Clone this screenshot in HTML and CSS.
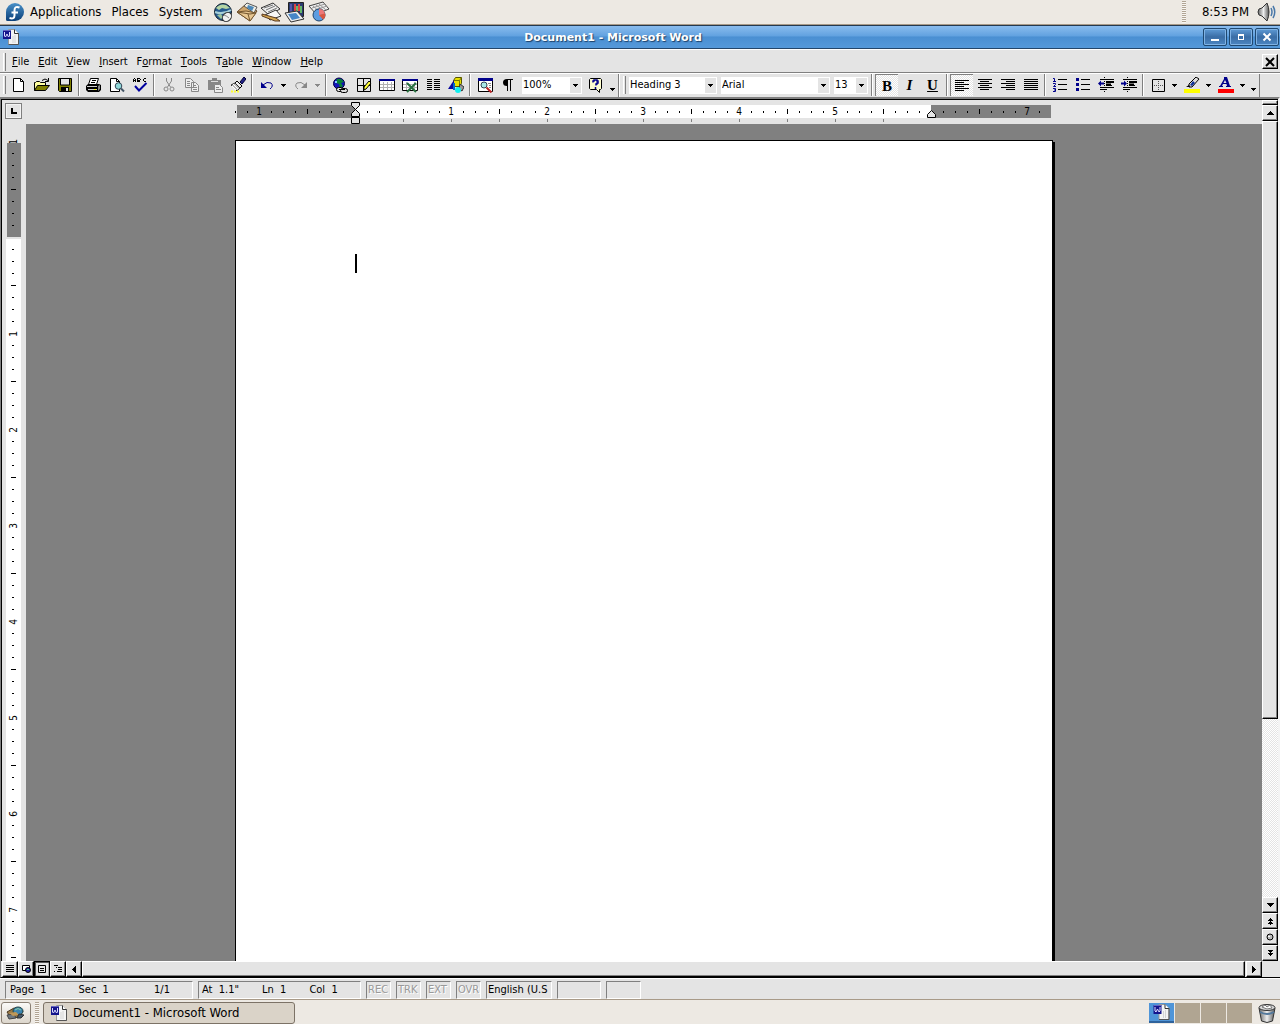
FILE: index.html
```html
<!DOCTYPE html>
<html lang="en">
<head>
<meta charset="utf-8">
<title>Document1 - Microsoft Word</title>
<link rel="stylesheet" href="styles.css">
</head>
<body>
<svg class="defs" width="0" height="0" aria-hidden="true">
  <defs>
    <linearGradient id="fedora" x1="0" y1="0" x2="0" y2="1"><stop offset="0" stop-color="#4a90c8"/><stop offset="1" stop-color="#0b3f78"/></linearGradient>
    <linearGradient id="metal" x1="0" y1="0" x2="1" y2="0"><stop offset="0" stop-color="#666"/><stop offset=".5" stop-color="#eee"/><stop offset="1" stop-color="#555"/></linearGradient>
  </defs>
  <symbol id="word" viewBox="0 0 16 16">
    <path d="M5.500 .5h6l4 4v11h-10z" fill="#f4f4f4" stroke="#999"/>
    <path d="M11.500 .5v4h4" fill="#fff" stroke="#333"/>
    <path d="M15.500 4v11.500h-10" fill="none" stroke="#555"/>
    <path d="M12 6v8M10 7v7" stroke="#d4d4d4"/>
    <rect x="0" y="1" width="8" height="9" fill="#15158c"/>
    <path d="M0 1.500h8" stroke="#6464c0"/>
    <path d="M1.500 3v4l1 1 1.500-3 1.500 3 1-1V3" fill="none" stroke="#dcdcff"/>
  </symbol>
  <symbol id="down" viewBox="0 0 5 3"><path d="M0 0h5v1h-1v1h-1v1h-1v-1h-1v-1h-1z"/></symbol>
</svg>

<header class="panel">
  <nav class="panel-menus">
    <svg width="20" height="20" viewBox="0 0 20 20" aria-hidden="true"><path d="M10 1a9 9 0 0 1 9 9 9 9 0 0 1-9 9H2.500Q1 19 1 17.500V10a9 9 0 0 1 9-9z" fill="url(#fedora)"/><path d="M14.500 5.500q-5-2-5 3v5q0 4-5 2.500M6.500 10.500h6.500" fill="none" stroke="#fff" stroke-width="2"/></svg>
    <button class="panel-item">Applications</button>
    <button class="panel-item">Places</button>
    <button class="panel-item">System</button>
  </nav>
  <div class="launchers">
    <button aria-label="Web browser"><svg width="22" height="22" viewBox="0 0 22 22"><circle cx="11" cy="11" r="8.500" fill="#255a8e" stroke="#14202c"/><path d="M4 7q4-5 10-3l4 3-4 1-4-1-3 2z" fill="#b4d4a4"/><path d="M3 11q8 3 16-2" fill="none" stroke="#a8d0d8" stroke-width="2"/><path d="M5 14l4-1 2 3-2 2z" fill="#9bc29b"/><ellipse cx="15" cy="16" rx="5" ry="4" transform="rotate(-45 15 16)" fill="#f0f0f0" stroke="#333"/><path d="M12 14q3 1 5 3" fill="none" stroke="#888"/></svg></button>
    <button aria-label="Email"><svg width="22" height="22" viewBox="0 0 22 22"><path d="M1 11L10 3l11 7-7 10z" fill="#cfa66c" stroke="#63482a"/><path d="M8 5l3-3 10 4-3 6z" fill="#f0efe6" stroke="#555"/><path d="M12 4l6 2-2 4-5-3z" fill="#4d88b8"/><path d="M1 11l9-1 10 2-6 8z" fill="#e7c792" stroke="#73552e"/><path d="M1 11l13 2 6-1M14 20l-2-7" fill="none" stroke="#73552e"/></svg></button>
    <button aria-label="Word processor"><svg width="22" height="22" viewBox="0 0 22 22"><path d="M1 7l12-5 7 6-11 6z" fill="#eee" stroke="#333"/><path d="M4 7l9-3M6 9l9-4M8 11l9-4" stroke="#777"/><path d="M5 14l11-5 5 6-11 4z" fill="#f8f8f8" stroke="#333"/><path d="M2 13l14 4 4 3-5 0L2 15z" fill="#d7a952" stroke="#5a3a20"/></svg></button>
    <button aria-label="Presentations"><svg width="22" height="22" viewBox="0 0 22 22"><path d="M4.500 1.500h15v14h-15z" fill="#2c3a70" stroke="#222"/><path d="M7 3v9" stroke="#55a" stroke-width="2"/><path d="M11 3v7M15 3v7" stroke="#d44" stroke-width="2"/><path d="M13 5v6M17 5v7" stroke="#67b86b" stroke-width="2"/><path d="M1 12l12-2 7 8-13 3z" fill="#eee" stroke="#333"/><path d="M4 13l8-1 4 5-8 2z" fill="#4686c7"/></svg></button>
    <button aria-label="Spreadsheet"><svg width="22" height="22" viewBox="0 0 22 22"><path d="M1 5l14-4 6 7-13 5z" fill="#eee" stroke="#444"/><path d="M5 5l7 6M8 4l7 5M11 3l7 6M4 7l13-4M7 9l12-4" stroke="#999"/><circle cx="11" cy="14" r="6" fill="#5c9ce0" stroke="#20456d"/><path d="M11 14V8a6 6 0 0 1 6 5z" fill="#e77"/><path d="M11 14l6-1.500q1 4-2 6z" fill="#d9553f"/></svg></button>
  </div>
  <div class="panel-right">
    <span class="grip"></span>
    <time class="clock">8:53 PM</time>
    <button aria-label="Volume"><svg width="20" height="20" viewBox="0 0 20 20"><path d="M2 7l3-1 5-5q4 9 0 18l-5-5-3-1q-2-3 0-6z" fill="url(#metal)" stroke="#333"/><path d="M14 6q2 4 0 8M16 4q3.500 6 0 12" fill="none" stroke="#4a78a8" stroke-width="1.500"/></svg></button>
  </div>
</header>

<main class="window">
  <div class="titlebar">
    <svg width="16" height="16" aria-hidden="true"><use href="#word"/></svg>
    <h1>Document1 - Microsoft Word</h1>
    <div class="wm-buttons">
      <button aria-label="Minimize"><svg width="12" height="12" viewBox="0 0 12 12"><path d="M2 8h8v2H2z" fill="#fff"/></svg></button>
      <button aria-label="Maximize"><svg width="12" height="12" viewBox="0 0 12 12"><path d="M3 3h6v6H3zM4 5v3h4V5z" fill="#fff" fill-rule="evenodd"/></svg></button>
      <button aria-label="Close"><svg width="12" height="12" viewBox="0 0 12 12"><path d="M2.500 2.500l7 7M9.500 2.500l-7 7" stroke="#fff" stroke-width="2"/></svg></button>
    </div>
  </div>

  <div class="menubar">
    <span class="handle"></span>
    <nav class="menus">
      <button><u>F</u>ile</button><button><u>E</u>dit</button><button><u>V</u>iew</button><button><u>I</u>nsert</button><button>F<u>o</u>rmat</button><button><u>T</u>ools</button><button>T<u>a</u>ble</button><button><u>W</u>indow</button><button><u>H</u>elp</button>
    </nav>
    <button class="bevel doc-close" aria-label="Close document"><svg width="10" height="10" viewBox="0 0 10 10"><path d="M1 1l8 8M9 1l-8 8" stroke="#000" stroke-width="2"/></svg></button>
  </div>

  <div class="toolbars">
    <div class="toolbar">
      <span class="handle"></span>
      <button class="tool" aria-label="New"><svg width="16" height="16" viewBox="0 0 16 16"><path d="M2.500 1.500h7l3 3v10h-10z" fill="#fff" stroke="#000"/><path d="M9.500 1.500v3h3" fill="none" stroke="#000"/></svg></button>
      <button class="tool" aria-label="Open"><svg width="18" height="16" viewBox="0 0 18 16"><path d="M1.500 13.500v-8h1l1-1h3l1 1h5v3" fill="#ffffa0" stroke="#000"/><path d="M1.500 13.500l3-5h12l-4 5z" fill="#808000" stroke="#000"/><path d="M9 3.500q3-3 6 0M15.500 1v3.500H12" fill="none" stroke="#000"/></svg></button>
      <button class="tool" aria-label="Save"><svg width="16" height="16" viewBox="0 0 16 16"><path d="M1.500 1.500h13v13h-12l-1-1z" fill="#808000" stroke="#000"/><path d="M4 2h8v6H4z" fill="#e4e4e4"/><path d="M4 10h8v5H4z"/><path d="M9 11h2v3H9z" fill="#e4e4e4"/><path d="M3.500 2v6h9V2" fill="none" stroke="#000"/></svg></button>
      <span class="sep"></span>
      <button class="tool" aria-label="Print"><svg width="17" height="16" viewBox="0 0 17 16"><path d="M5.500 1.500h8l-2 6h-8z" fill="#fff" stroke="#000"/><path d="M7 3.500h4M6 5.500h4" stroke="#000"/><path d="M3 7h11l2 1v5l-2 2H3l-2-2V9z"/><path d="M2 9.500h10M3 12.500h9" stroke="#ccc"/><path d="M9 12.500h2" stroke="#ff0"/><path d="M13 9l2-1v4l-2 2z" fill="#888"/></svg></button>
      <button class="tool" aria-label="Print preview"><svg width="17" height="16" viewBox="0 0 17 16"><path d="M2.500 1.500h6l3 3v10h-9z" fill="#fff" stroke="#000"/><path d="M8.500 1.500v3h3" fill="none" stroke="#000"/><circle cx="10.500" cy="9" r="3.300" fill="#8fd8d8" stroke="#345"/><path d="M13 11.500l3 3" stroke="#456" stroke-width="2"/></svg></button>
      <button class="tool" aria-label="Spelling"><svg width="16" height="16" viewBox="0 0 16 16"><path d="M1.500 5V2M3.500 5V2M2 1.500h1M2 3.500h1M5.500 5V1M6 1.500h2M6 3.500h2M6 4.500h2M8.500 2v1M11.500 2v2M12 1.500h2M12 4.500h2" fill="none" stroke="#000"/><path d="M3 9l4 4.500L14.500 6" fill="none" stroke="#0000a0" stroke-width="2"/></svg></button>
      <span class="sep"></span>
      <button class="tool off" aria-label="Cut" disabled><svg width="16" height="16" viewBox="0 0 16 16"><path d="M5.500 1v3l4 6M10.500 1v3l-4 6" fill="none" stroke="#888"/><circle cx="5" cy="12" r="2" fill="none" stroke="#888"/><circle cx="11" cy="12" r="2" fill="none" stroke="#888"/></svg></button>
      <button class="tool off" aria-label="Copy" disabled><svg width="16" height="16" viewBox="0 0 16 16"><path d="M1.500 1.500h5l3 3v6h-8zM7.500 5.500h4l3 3v6h-7z" fill="#eee" stroke="#888"/><path d="M3 4.500h3M3 6.500h3M3 8.500h3M9 8.500h3M9 10.500h4M9 12.500h4" stroke="#888"/></svg></button>
      <button class="tool off" aria-label="Paste" disabled><svg width="16" height="16" viewBox="0 0 16 16"><path d="M1 3h4V1h5v2h4v10H1z" fill="#888"/><path d="M4 4.500h7" stroke="#ddd"/><path d="M7.500 7.500h5l3 3v5h-8z" fill="#eee" stroke="#888"/><path d="M9 10.500h3M9 12.500h5" stroke="#888"/></svg></button>
      <button class="tool" aria-label="Format painter"><svg width="16" height="16" viewBox="0 0 16 16"><path d="M14 0l2 2-4 5-2-2z" fill="#228" stroke="#003"/><path d="M7 4l5 5-2 2-5-5z" fill="#eee" stroke="#000"/><path d="M5 6l5 5-3 3-6-6z" fill="#bbb" stroke="#333"/><path d="M3 7l5 5M2 9l4 4" stroke="#fff"/><path d="M1 14.500h8" stroke="#ff3" stroke-width="2" stroke-dasharray="2 1"/></svg></button>
      <span class="sep"></span>
      <button class="tool" aria-label="Undo"><svg width="16" height="16" viewBox="0 0 16 16"><path d="M2 5v6h6z" fill="#00008b"/><path d="M4 8q4-4 8-2 3 3-1 6" fill="none" stroke="#00008b"/></svg></button>
      <button class="drop" aria-label="Undo list"><svg width="5" height="3"><use href="#down"/></svg></button>
      <button class="tool off" aria-label="Redo" disabled><svg width="16" height="16" viewBox="0 0 16 16"><path d="M14 5v6H8z" fill="#888"/><path d="M12 8q-4-4-8-2-3 3 1 6" fill="none" stroke="#888"/></svg></button>
      <button class="drop off" aria-label="Redo list" disabled><svg width="5" height="3"><use href="#down"/></svg></button>
      <span class="sep"></span>
      <button class="tool" aria-label="Insert hyperlink"><svg width="17" height="17" viewBox="0 0 17 17"><circle cx="7" cy="6.500" r="5.500" fill="#1414b8" stroke="#004"/><path d="M5 2l4 0 3 3-3 1 2 3-3 2-1-4-3-1z" fill="#088038"/><path d="M3 4h2v2H3z" fill="#8cf"/><rect x="4.500" y="10.500" width="7" height="4" rx="2" fill="#ddd" stroke="#000"/><rect x="8.500" y="11.500" width="7" height="4" rx="2" fill="#ddd" stroke="#000"/><path d="M7 12.500h6" stroke="#000"/></svg></button>
      <button class="tool" aria-label="Tables and borders"><svg width="16" height="16" viewBox="0 0 16 16"><path d="M1.500 1.500h13v13h-13zM7.500 1.500v13M1.500 8.500h13" fill="none" stroke="#000"/><path d="M13 4l2 2-5 6-2 1 0-3z" fill="#ff3" stroke="#000"/></svg></button>
      <button class="tool" aria-label="Insert table"><svg width="16" height="16" viewBox="0 0 16 16"><path d="M.5 2.500h15v11H.5z" fill="#fff" stroke="#000"/><path d="M0 2h16v2H0z" fill="#00008b"/><path d="M1 7.500h14M1 10.500h14M4.500 5v8M8.500 5v8M12.500 5v8" stroke="#b0b0b0"/></svg></button>
      <button class="tool" aria-label="Insert worksheet"><svg width="16" height="16" viewBox="0 0 16 16"><path d="M.5 2.500h15v11H.5z" fill="#fff" stroke="#000"/><path d="M0 2h16v2H0z" fill="#00008b"/><path d="M1 7.500h14M1 10.500h14M4.500 5v8M12.500 5v8" stroke="#b0b0b0"/><path d="M5 6l9 9M14 6l-9 9" stroke="#287040" stroke-width="2"/></svg></button>
      <button class="tool" aria-label="Columns"><svg width="16" height="16" viewBox="0 0 16 16"><path d="M2 2.500h5M2 4.500h5M2 6.500h5M2 8.500h5M2 10.500h5M2 12.500h5M9 2.500h6M9 4.500h6M9 6.500h6M9 8.500h6M9 10.500h6M9 12.500h6" stroke="#000"/></svg></button>
      <button class="tool" aria-label="Drawing"><svg width="16" height="16" viewBox="0 0 16 16"><path d="M5.500 3.500l2-3h6v6l-2 3h-6z" fill="#e8e000" stroke="#555500"/><path d="M5.500 3.500h6v5M11.500 3.500l2-3" fill="none" stroke="#777700"/><path d="M0 12l6-9v9z" fill="#0808a0"/><path d="M5 6h2v7H5z" fill="#06c"/><path d="M12 7l4 3-2 4-3-2z" fill="#999" stroke="#333"/><circle cx="10" cy="13" r="3" fill="#1ee"/></svg></button>
      <span class="sep"></span>
      <button class="tool" aria-label="Document map"><svg width="16" height="16" viewBox="0 0 16 16"><path d="M1.500 2.500h14v12h-14z" fill="#fff" stroke="#000"/><path d="M1 1h15v3H1z" fill="#00008b"/><path d="M11 6.500h3M12 8.500h2M12 10.500h2" stroke="#888"/><circle cx="7" cy="8" r="3" fill="#a8e8e8" stroke="#345"/><path d="M9.500 10.500l5 5" stroke="#b22" stroke-width="2"/></svg></button>
      <button class="tool" aria-label="Show paragraph marks"><svg width="16" height="16" viewBox="0 0 16 16"><path d="M13 2v1h-2v11h-1V3H8v11H7V9Q3 9 3 5.500T7 2z"/></svg></button>
      <label class="combo combo-zoom"><select aria-label="Zoom"><option>100%</option></select><span class="arrow"><svg width="5" height="3"><use href="#down"/></svg></span></label>
      <button class="tool" aria-label="Help"><svg width="16" height="16" viewBox="0 0 16 16"><path d="M2.500 1.500h10l1 1v9l-1 1h-1v3l-3-3h-6l-1-1v-9z" fill="#ffffd0" stroke="#000"/><path d="M5 5.500V4h1V3h3v1h1v2H9v1H8v1.500M7.500 10v2" fill="none" stroke="#00008b" stroke-width="1.500"/></svg></button>
      <button class="drop more" aria-label="More buttons"><svg width="5" height="3"><use href="#down"/></svg></button>
    </div>
    <div class="toolbar">
      <span class="handle"></span>
      <label class="combo combo-style"><select aria-label="Style"><option>Heading 3</option></select><span class="arrow"><svg width="5" height="3"><use href="#down"/></svg></span></label>
      <label class="combo combo-font"><select aria-label="Font"><option>Arial</option></select><span class="arrow"><svg width="5" height="3"><use href="#down"/></svg></span></label>
      <label class="combo combo-size"><select aria-label="Font size"><option>13</option></select><span class="arrow"><svg width="5" height="3"><use href="#down"/></svg></span></label>
      <span class="sep"></span>
      <button class="tool letter pressed" aria-pressed="true"><b>B</b></button>
      <button class="tool letter"><i>I</i></button>
      <button class="tool letter"><u>U</u></button>
      <span class="sep"></span>
      <button class="tool pressed" aria-pressed="true" aria-label="Align left"><svg width="16" height="16" viewBox="0 0 16 16"><path d="M1 2.500h14M1 4.500h9M1 6.500h14M1 8.500h9M1 10.500h14M1 12.500h9" stroke="#000"/></svg></button>
      <button class="tool" aria-label="Center"><svg width="16" height="16" viewBox="0 0 16 16"><path d="M1 2.500h14M3 4.500h9M1 6.500h14M3 8.500h9M1 10.500h14M3 12.500h9" stroke="#000"/></svg></button>
      <button class="tool" aria-label="Align right"><svg width="16" height="16" viewBox="0 0 16 16"><path d="M1 2.500h14M6 4.500h9M1 6.500h14M6 8.500h9M1 10.500h14M6 12.500h9" stroke="#000"/></svg></button>
      <button class="tool" aria-label="Justify"><svg width="16" height="16" viewBox="0 0 16 16"><path d="M1 2.500h14M1 4.500h14M1 6.500h14M1 8.500h14M1 10.500h14M1 12.500h14" stroke="#000"/></svg></button>
      <span class="sep"></span>
      <button class="tool" aria-label="Numbering"><svg width="16" height="16" viewBox="0 0 16 16"><path d="M1 1.500h1.500v3M1 4.500h3M1 6.500h2.500v1L1.500 9.500H4M1 11.500h2.500v3H1M2 13h1" fill="none" stroke="#00008b"/><path d="M6 2.500h9M6 7.500h9M6 12.500h9" stroke="#000"/></svg></button>
      <button class="tool" aria-label="Bullets"><svg width="16" height="16" viewBox="0 0 16 16"><path d="M1 1h3v3H1zM1 6h3v3H1zM1 11h3v3H1z" fill="#00008b"/><path d="M6 2.500h9M6 7.500h9M6 12.500h9" stroke="#000"/></svg></button>
      <button class="tool" aria-label="Decrease indent"><svg width="16" height="16" viewBox="0 0 16 16"><path d="M2 2.500h14M8 8.500h6M2 10.500h14M2 12.500h7" stroke="#000"/><path d="M8 5h8M8 7.500h5" stroke="#000" stroke-width="2"/><path d="M0 6.500l3-3v2h3v2H3v2z" fill="#00008b"/><path d="M6.500 0v16" stroke="#000" stroke-dasharray="1 1"/></svg></button>
      <button class="tool" aria-label="Increase indent"><svg width="16" height="16" viewBox="0 0 16 16"><path d="M2 2.500h14M8 8.500h6M2 10.500h14M2 12.500h7" stroke="#000"/><path d="M8 5h8M8 7.500h5" stroke="#000" stroke-width="2"/><path d="M6 6.500l-3-3v2H0v2h3v2z" fill="#00008b"/><path d="M6.500 0v16" stroke="#000" stroke-dasharray="1 1"/></svg></button>
      <span class="sep"></span>
      <button class="tool" aria-label="Borders"><svg width="16" height="16" viewBox="0 0 16 16"><path d="M2.500 2.500h12v12h-12z" fill="none" stroke="#000"/><path d="M4 8.500h10M8.500 4v10" stroke="#555" stroke-dasharray="1 1"/></svg></button>
      <button class="drop" aria-label="Border list"><svg width="5" height="3"><use href="#down"/></svg></button>
      <button class="tool" aria-label="Highlight"><svg width="16" height="16" viewBox="0 0 16 16"><path d="M12 0l3 2-7 8-3 0 0-3z" fill="#ddd" stroke="#000"/><path d="M9 4l2 2-3 3-2-1z" fill="#139"/><path d="M2 10l3-2 1 2z"/><path d="M0 12h16v4H0z" fill="#ff0"/></svg></button>
      <button class="drop" aria-label="Highlight colors"><svg width="5" height="3"><use href="#down"/></svg></button>
      <button class="tool" aria-label="Font color"><svg width="16" height="16" viewBox="0 0 16 16"><path d="M6 0h3l3 9h1v1H8V9h1l-.5-2H5L4 9h1v1H1V9h1l4-7zM7 3L5.500 6h3z" fill="#00008b" fill-rule="evenodd"/><path d="M0 12h16v4H0z" fill="#f00"/></svg></button>
      <button class="drop" aria-label="Font colors"><svg width="5" height="3"><use href="#down"/></svg></button>
      <button class="drop more" aria-label="More buttons"><svg width="5" height="3"><use href="#down"/></svg></button>
    </div>
  </div>

  <div class="editor">
    <div class="editor-main">
      <div class="ruler-row">
        <button class="tab-stop" aria-label="Left tab"><svg width="6" height="6" viewBox="0 0 6 6"><path d="M0 0h2v4h4v2H0z"/></svg></button>
        <div class="ruler-track">
          <svg class="ruler" width="818" height="24" viewBox="0 0 818 24">
            <defs><pattern id="hticks" x="24" y="0" width="96" height="24" patternUnits="userSpaceOnUse"><path d="M12 11h1v2h-1zM24 11h1v2h-1zM36 11h1v2h-1zM48 9h1v5h-1zM60 11h1v2h-1zM72 11h1v2h-1zM84 11h1v2h-1z"/></pattern>
            <pattern id="htabs" x="120" y="0" width="48" height="24" patternUnits="userSpaceOnUse"><path d="M0 19h1v3H0z" fill="#808080"/></pattern></defs>
            <rect x="2" y="5" width="814" height="13" fill="#808080"/>
            <rect x="121" y="5" width="575" height="13" fill="#fff"/>
            <rect x="0" y="5" width="816" height="13" fill="url(#hticks)"/>
            <rect x="160" y="19" width="530" height="4" fill="url(#htabs)"/>
            <g class="ruler-text"><text x="24" y="15">1</text><text x="216" y="15">1</text><text x="312" y="15">2</text><text x="408" y="15">3</text><text x="504" y="15">4</text><text x="600" y="15">5</text><text x="792" y="15">7</text></g>
            <path d="M116.500 2.500h8v3l-4 4-4-4zM120.500 9.500l4 4v3h-8v-3zM116.500 17.500h8v6h-8zM696.500 10.500l4 4v3h-8v-3z" fill="#e4e4e4" stroke="#000"/>
          </svg>
        </div>
      </div>
      <div class="work-row">
        <div class="vruler">
          <svg width="24" height="2000" viewBox="0 0 24 2000">
            <defs><pattern id="vticks" x="0" y="17" width="24" height="96" patternUnits="userSpaceOnUse"><path d="M10 12h2v1h-2zM10 24h2v1h-2zM10 36h2v1h-2zM9 48h5v1H9zM10 60h2v1h-2zM10 72h2v1h-2zM10 84h2v1h-2z"/></pattern></defs>
            <g class="ruler-text"><text transform="translate(15 18) rotate(-90)">1</text></g>
            <rect x="5" y="19" width="14" height="94" fill="#808080"/>
            <rect x="4" y="115" width="15" height="1885" fill="#fff"/>
            <rect x="0" y="19" width="24" height="1981" fill="url(#vticks)"/>
            <g class="ruler-text"><text transform="translate(15 210) rotate(-90)">1</text><text transform="translate(15 306) rotate(-90)">2</text><text transform="translate(15 402) rotate(-90)">3</text><text transform="translate(15 498) rotate(-90)">4</text><text transform="translate(15 594) rotate(-90)">5</text><text transform="translate(15 690) rotate(-90)">6</text><text transform="translate(15 786) rotate(-90)">7</text></g>
          </svg>
        </div>
        <div class="desk">
          <div class="sheet" contenteditable="true" role="textbox" aria-label="Document"><span class="caret"></span></div>
        </div>
      </div>
    </div>
    <div class="vscroll">
      <span class="bevel split"></span>
      <button class="bevel sq" aria-label="Scroll up"><svg width="7" height="4" viewBox="0 0 7 4"><path d="M3 0h1v1h1v1h1v1h1v1H0V3h1V2h1V1h1z"/></svg></button>
      <div class="vtrack"><div class="bevel vthumb"></div></div>
      <button class="bevel sq" aria-label="Scroll down"><svg width="7" height="4" viewBox="0 0 7 4"><path d="M0 0h7v1H6v1H5v1H4v1H3V3H2V2H1V1H0z"/></svg></button>
      <button class="bevel sq" aria-label="Previous page"><svg width="7" height="7" viewBox="0 0 7 7"><path d="M3 0h1v1h1v1h1v1H1V2h1V1h1zM3 3h1v1h1v1h1v1H4v1H3V6H1V5h1V4h1z"/></svg></button>
      <button class="bevel sq" aria-label="Select browse object"><svg width="8" height="8" viewBox="0 0 8 8"><circle cx="4" cy="4" r="3" fill="#bbb" stroke="#000"/><path d="M2 3h2v1H2z" fill="#fff"/></svg></button>
      <button class="bevel sq" aria-label="Next page"><svg width="7" height="7" viewBox="0 0 7 7"><path d="M1 0h5v1H5v1H4v1H3V2H2V1H1zM1 3h5v1H5v1H4v1H3V5H2V4H1z"/></svg></button>
    </div>
  </div>

  <div class="hscroll">
    <button class="bevel sq" aria-label="Normal view"><svg width="8" height="8" viewBox="0 0 8 8"><path d="M0 .5h8M0 2.500h8M0 4.500h8M0 6.500h8" stroke="#000"/></svg></button>
    <button class="bevel sq" aria-label="Web layout view"><svg width="9" height="8" viewBox="0 0 9 8"><path d="M.5 .5h7v5h-7z" fill="#fff" stroke="#000"/><circle cx="6" cy="5" r="2.500" fill="#22a" stroke="#000"/><path d="M5 4h2v1H5z" fill="#4d8"/></svg></button>
    <button class="bevel sq sunken" aria-label="Print layout view" aria-pressed="true"><svg width="8" height="8" viewBox="0 0 8 8"><path d="M.5 .5h7v7h-7zM2 3.500h4M2 5.500h4" fill="none" stroke="#000"/></svg></button>
    <button class="bevel sq" aria-label="Outline view"><svg width="8" height="8" viewBox="0 0 8 8"><path d="M0 .5h4M2 2.500h1M4 2.500h4M4 4.500h4M0 6.500h1M3 6.500h5" stroke="#000"/></svg></button>
    <button class="bevel sq" aria-label="Scroll left"><svg width="4" height="7" viewBox="0 0 4 7"><path d="M4 0v7H3V6H2V5H1V4H0V3h1V2h1V1h1V0z"/></svg></button>
    <div class="bevel hthumb"></div>
    <button class="bevel sq" aria-label="Scroll right"><svg width="4" height="7" viewBox="0 0 4 7"><path d="M0 0v7h1V6h1V5h1V4h1V3H3V2H2V1H1V0z"/></svg></button>
  </div>

  <footer class="status">
    <div class="cell cell-page"><span>Page&nbsp; 1</span><span>Sec&nbsp; 1</span><span class="last">1/1</span></div>
    <div class="cell cell-pos"><span>At&nbsp; 1.1"</span><span>Ln&nbsp; 1</span><span>Col&nbsp; 1</span></div>
    <div class="cell mode">REC</div>
    <div class="cell mode">TRK</div>
    <div class="cell mode">EXT</div>
    <div class="cell mode">OVR</div>
    <div class="cell cell-lang">English (U.S</div>
    <div class="cell cell-spell"></div>
    <div class="cell cell-save"></div>
  </footer>
</main>

<footer class="taskbar">
  <button class="show-desktop" aria-label="Show desktop"><svg width="20" height="14" viewBox="0 0 20 14"><path d="M1 6l7-4 9 3-3 6-9 1z" fill="#9a7a48" stroke="#4a3820"/><ellipse cx="12" cy="5" rx="5" ry="4" fill="#3c84b0" stroke="#244"/><path d="M9 4q3-3 6 0" stroke="#8ed0a0" fill="none"/><path d="M1 9l7-1 2 4-7 1z" fill="#6d7780" stroke="#444"/><path d="M3 7l7-1 3 3-6 1z" fill="#c09858"/><path d="M13 8l5 1-3 3-4 0z" fill="#46586a" stroke="#333"/></svg></button>
  <span class="grip"></span>
  <button class="task"><svg width="16" height="16" aria-hidden="true"><use href="#word"/></svg><span>Document1 - Microsoft Word</span></button>
  <div class="tray">
    <div class="pager">
      <button class="current" aria-label="Workspace 1"><svg width="17" height="16" aria-hidden="true"><use href="#word"/></svg></button><button aria-label="Workspace 2"></button><button aria-label="Workspace 3"></button><button aria-label="Workspace 4"></button>
    </div>
    <button class="trash" aria-label="Trash"><svg width="20" height="20" viewBox="0 0 20 20"><path d="M2 5l2.500 13q5.500 3 11 0L18 5z" fill="url(#metal)" stroke="#333"/><ellipse cx="10" cy="4.500" rx="8" ry="3" fill="#d8d8d8" stroke="#333"/><path d="M5 4l3-2 2 2 3-2 2 3-5 1z" fill="#fff" stroke="#777"/><path d="M3 9q7 4 14 0" fill="none" stroke="#52789c" stroke-width="2"/></svg></button>
  </div>
</footer>
</body>
</html>
```
FILE: styles.css
```css
* { box-sizing: border-box; }

body {
  margin: 0;
  height: 100vh;
  display: flex;
  flex-direction: column;
  overflow: hidden;
  background: #ede9e3;
  color: #000;
  font: 11px/14px "DejaVu Sans Condensed", "DejaVu Sans", sans-serif;
}

svg { display: block; flex: none; }
.defs { position: absolute; }

button {
  display: flex;
  align-items: center;
  justify-content: center;
  flex: none;
  margin: 0;
  padding: 0;
  border: 0;
  background: none;
  color: inherit;
  font: inherit;
}

/* desktop panels */
.panel {
  flex: none;
  display: flex;
  align-items: center;
  height: 25px;
  padding: 0 3px 0 5px;
  border-bottom: 1px solid #a89a88;
  font: 13px/16px "DejaVu Sans Condensed", "DejaVu Sans", sans-serif;
}
.panel-menus { display: flex; align-items: center; }
.panel-item { padding: 0 5px; }
.launchers { display: flex; gap: 2px; margin-left: 5px; }
.panel-right { display: flex; align-items: center; gap: 8px; margin-left: auto; }
.clock { margin-left: 8px; }
.grip {
  width: 4px;
  height: 22px;
  background: repeating-linear-gradient(#b0a494 0 1px, #f8f6f2 1px 2px);
}

/* window frame */
.window {
  flex: 1;
  min-height: 0;
  display: flex;
  flex-direction: column;
  background: #e4e4e4;
}
.titlebar {
  flex: none;
  display: flex;
  align-items: center;
  height: 24px;
  padding: 0 1px 0 3px;
  border-top: 1px solid #24394f;
  border-bottom: 1px solid #24466a;
  background: linear-gradient(#8abcee, #62a2e0 45%, #4a8fd2 50%, #5599da);
}
.titlebar h1 {
  flex: 1;
  margin: 0;
  padding: 1px 0 0 4px;
  text-align: center;
  color: #fff;
  font: bold 11px/16px "DejaVu Sans", sans-serif;
  text-shadow: 1px 1px 1px #1c3f66;
}
.wm-buttons { display: flex; gap: 2px; }
.wm-buttons button {
  width: 24px;
  height: 18px;
  border: 1px solid #1f4870;
  border-radius: 2px;
  box-shadow: inset 0 0 0 1px #7fb2e4;
  background: linear-gradient(#5f9bd6, #3a6da5 50%, #4c86c2);
}

.menubar {
  flex: none;
  display: flex;
  align-items: center;
  height: 24px;
  padding: 1px 2px 0 3px;
  border-top: 1px solid #fff;
  border-bottom: 1px solid #808080;
}
.menus { display: flex; padding-left: 1px; }
.menus button { padding: 0 4px 0 5px; }
.doc-close { width: 16px; height: 15px; margin-left: auto; }
.handle {
  flex: none;
  width: 3px;
  height: 18px;
  border-left: 1px solid #fff;
  border-right: 1px solid #808080;
}

.toolbars { flex: none; display: flex; height: 24px; border-top: 1px solid #fff; }
.toolbar {
  display: flex;
  align-items: center;
  padding: 0 0 1px 3px;
  border-right: 1px solid #808080;
}
.toolbar + .toolbar { border-left: 1px solid #fff; }
.tool { width: 23px; height: 22px; }
.handle + .tool { margin-left: 1px; }
.drop { width: 11px; height: 22px; }
.more { padding-top: 8px; }
.off { fill: #888; }
.sep {
  flex: none;
  width: 2px;
  height: 22px;
  margin: 0 2px;
  border-left: 1px solid #808080;
  border-right: 1px solid #fff;
}
.letter { font: bold 15px/16px "Liberation Serif", serif; }
.pressed {
  border-top: 1px solid #808080;
  border-left: 1px solid #808080;
  background: repeating-conic-gradient(#fff 0 25%, #e4e4e4 0 50%) 0 0 / 2px 2px;
}
.combo {
  display: grid;
  grid-template-columns: 1fr 12px;
  align-items: center;
  height: 17px;
  background: #fff;
}
.combo select {
  grid-area: 1 / 1 / 2 / 3;
  height: 17px;
  margin: 0;
  padding: 0 12px 0 1px;
  border: 0;
  appearance: none;
  background: none;
  color: #000;
  font: inherit;
}
.arrow {
  grid-area: 1 / 2 / 2 / 3;
  display: flex;
  align-items: center;
  justify-content: center;
  height: 15px;
  margin-right: 1px;
  background: #e4e4e4;
  pointer-events: none;
}
.combo-zoom { width: 60px; margin: 0 2px 0 3px; }
.combo-style { width: 88px; margin: 0 4px 0 3px; }
.combo-font { width: 109px; margin-right: 4px; }
.combo-size { width: 34px; margin-right: 1px; }

/* editing area */
.bevel {
  flex: none;
  border: 1px solid #000;
  border-top-color: #fff;
  border-left-color: #fff;
  box-shadow: inset -1px -1px 0 #808080;
  background: #e4e4e4;
}
.sq { width: 16px; height: 16px; }
.sunken {
  border: 1px solid #000;
  box-shadow: inset 1px 1px 0 #555, inset -1px -1px 0 #aaa;
}
.editor {
  flex: 1;
  min-height: 0;
  display: flex;
  border-top: 2px solid #808080;
  border-left: 1px solid #808080;
  border-right: 2px solid #f4f4f4;
}
.editor-main {
  flex: 1;
  min-width: 0;
  display: flex;
  flex-direction: column;
  border-top: 1px solid #000;
  border-left: 1px solid #000;
}
.ruler-row { flex: none; display: flex; align-items: flex-start; height: 24px; }
.tab-stop {
  width: 17px;
  height: 16px;
  margin: 3px 4px 0 3px;
  border: 1px solid #808080;
  box-shadow: inset 0 0 0 1px #f4f4f4;
}
.ruler-track { flex: 1; display: flex; justify-content: center; }
.ruler-text {
  font: 10px/12px "DejaVu Sans Condensed", sans-serif;
  text-anchor: middle;
}
.work-row { flex: 1; min-height: 0; display: flex; overflow: hidden; }
.vruler { width: 24px; overflow: hidden; }
.desk {
  flex: 1;
  display: flex;
  justify-content: center;
  padding-top: 16px;
  background: #808080;
}
.sheet {
  width: 818px;
  padding: 113px 119px 0;
  border: 1px solid #000;
  border-bottom: 0;
  box-shadow: 2px 2px 0 #000;
  background: #fff;
  outline: 0;
}
.caret { display: block; width: 2px; height: 19px; background: #000; }

.vscroll {
  flex: none;
  display: flex;
  flex-direction: column;
  width: 16px;
  border-top: 1px solid #000;
}
.split { height: 5px; }
.vtrack {
  flex: 1;
  background: repeating-conic-gradient(#fff 0 25%, #e4e4e4 0 50%) 0 0 / 2px 2px;
}
.vthumb { height: 77%; }

.hscroll {
  flex: none;
  display: flex;
  height: 17px;
  padding: 0 18px 0 1px;
  border-left: 1px solid #808080;
  border-bottom: 1px solid #000;
}
.hthumb { flex: 1; height: 16px; margin-right: 1px; }

.status {
  flex: none;
  display: flex;
  align-items: center;
  gap: 5px;
  height: 21px;
  padding: 1px 0 0 5px;
  border-top: 1px solid #fff;
}
.cell {
  display: flex;
  height: 18px;
  padding: 1px 1px 0 4px;
  border: 1px solid #fff;
  border-top-color: #808080;
  border-left-color: #808080;
  white-space: nowrap;
}
.cell-page { width: 188px; gap: 32px; }
.cell-page .last { margin-left: auto; padding-right: 21px; }
.cell-pos { width: 163px; gap: 23px; padding-left: 3px; }
.mode { width: 25px; padding-left: 1px; color: #999; text-shadow: 1px 1px 0 #fff; }
.cell-lang { width: 66px; padding-left: 1px; overflow: hidden; }
.cell-spell { width: 44px; }
.cell-save { width: 35px; }

.taskbar {
  flex: none;
  display: flex;
  align-items: center;
  height: 25px;
  padding: 1px 3px 0 1px;
  border-top: 1px solid #a89a88;
  font: 13px/16px "DejaVu Sans Condensed", "DejaVu Sans", sans-serif;
}
.show-desktop {
  width: 30px;
  height: 22px;
  margin-right: 4px;
  border: 1px solid #8a8074;
  border-radius: 3px;
  background: linear-gradient(#fbfaf8, #dcd6cc);
}
.task {
  justify-content: flex-start;
  gap: 6px;
  width: 252px;
  height: 22px;
  margin-left: 4px;
  padding-left: 7px;
  border: 1px solid #7c7266;
  border-radius: 3px;
  background: #dad3c8;
}
.tray { display: flex; align-items: center; gap: 5px; margin-left: auto; }
.pager { display: flex; gap: 1px; }
.pager button { width: 25px; height: 20px; background: #b0a592; }
.pager .current { border-bottom: 2px solid #2f639c; background: #4f95d8; }
```
